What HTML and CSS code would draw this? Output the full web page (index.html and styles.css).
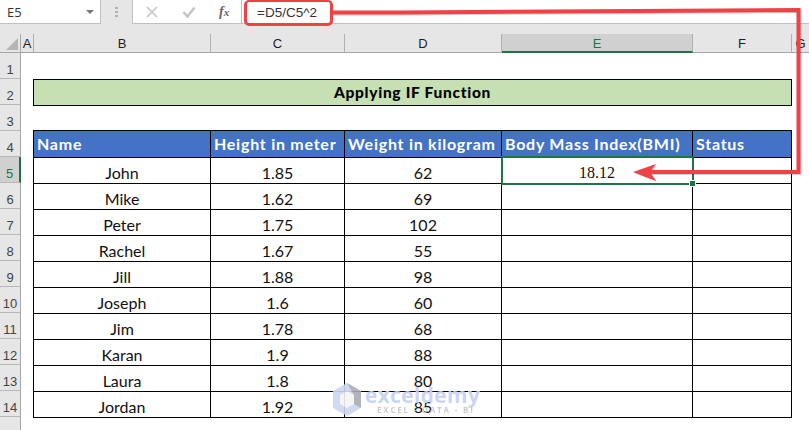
FILE: index.html
```html
<!DOCTYPE html>
<html lang="en">
<head>
<meta charset="utf-8">
<title>Applying IF Function</title>
<link rel="stylesheet" href="styles.css">
</head>
<body>
<div class="app">
  <div class="toolbar">
    <div class="namebox"><span>E5</span><i class="caret"></i></div>
    <div class="grip"><b></b><b></b><b></b></div>
    <div class="fxbox">
      <svg class="ic" width="12" height="12" viewBox="0 0 12 12"><path d="M1 1l10 10M11 1L1 11" stroke="#c4c4c4" stroke-width="1.600" fill="none"/></svg>
      <svg class="ic" width="14" height="12" viewBox="0 0 14 12"><path d="M1.500 6l4 4.500 7-9" stroke="#c4c4c4" stroke-width="2.400" fill="none"/></svg>
      <span class="fx">f<small>x</small></span>
    </div>
    <div class="formula"><span class="ftext">=D5/C5^2</span></div>
  </div>
  <div class="sheet">
    <div class="corner"><i></i></div>
    <div class="ch a">A</div><div class="ch">B</div><div class="ch">C</div><div class="ch">D</div><div class="ch sel">E</div><div class="ch">F</div><div class="ch last">G</div>

    <div class="rh">1</div><div class="row"></div>
    <div class="rh">2</div><div class="row"><div class="banner">Applying IF Function</div></div>
    <div class="rh">3</div><div class="row"></div>
    <div class="rh">4</div><div class="row tr head"><div>Name</div><div>Height in meter</div><div>Weight in kilogram</div><div>Body Mass Index(BMI)</div><div>Status</div></div>
    <div class="rh rsel">5</div><div class="row tr"><div class="c">John</div><div class="c">1.85</div><div class="c">62</div><div class="c active">18.12</div><div></div></div>
    <div class="rh">6</div><div class="row tr"><div class="c">Mike</div><div class="c">1.62</div><div class="c">69</div><div></div><div></div></div>
    <div class="rh">7</div><div class="row tr"><div class="c">Peter</div><div class="c">1.75</div><div class="c">102</div><div></div><div></div></div>
    <div class="rh">8</div><div class="row tr"><div class="c">Rachel</div><div class="c">1.67</div><div class="c">55</div><div></div><div></div></div>
    <div class="rh">9</div><div class="row tr"><div class="c">Jill</div><div class="c">1.88</div><div class="c">98</div><div></div><div></div></div>
    <div class="rh">10</div><div class="row tr"><div class="c">Joseph</div><div class="c">1.6</div><div class="c">60</div><div></div><div></div></div>
    <div class="rh">11</div><div class="row tr"><div class="c">Jim</div><div class="c">1.78</div><div class="c">68</div><div></div><div></div></div>
    <div class="rh">12</div><div class="row tr"><div class="c">Karan</div><div class="c">1.9</div><div class="c">88</div><div></div><div></div></div>
    <div class="rh">13</div><div class="row tr"><div class="c">Laura</div><div class="c">1.8</div><div class="c">80</div><div></div><div></div></div>
    <div class="rh">14</div><div class="row tr"><div class="c">Jordan</div><div class="c">1.92</div><div class="c">85</div><div></div><div></div></div>
    <div class="rh end"></div><div class="row"></div>
  </div>
  <div class="mark">
    <svg width="28" height="33" viewBox="0 0 28 33"><path d="M14 0l14 8v17l-14 8-14-8V8z" fill="#cdd7f2"/><path d="M14 0l14 8v17l-7-4v-9z" fill="#a9adb3"/><path d="M14 8l7 4v9l-7 4-7-4v-9z" fill="#f4f4f4"/></svg>
    <div class="marktext"><span class="m1">exceldemy</span><span class="m2">EXCEL - DATA - BI</span></div>
  </div>
  <svg class="arrow" width="809" height="430" viewBox="0 0 809 430">
    <path d="M332 12.500H400L798.500 10V172H650" fill="none" stroke="#ef4146" stroke-width="4"/>
    <path d="M633 172L656 164 650 172 656 181z" fill="#ef4146"/>
  </svg>
</div>
</body>
</html>
```
FILE: styles.css
```css
html, body { margin: 0; padding: 0; background: #fff; }
.app { position: relative; width: 809px; height: 430px; overflow: hidden; font-family: "Liberation Sans", Arial, sans-serif; color: #111; }
.toolbar { display: flex; height: 34px; background: #e6e6e6; box-sizing: border-box; }
.namebox { width: 101px; height: 24px; background: #fff; border-bottom: 1px solid #c0c0c0; border-right: 1px solid #c0c0c0; display: flex; align-items: center; justify-content: space-between; padding: 0 6px 0 7px; box-sizing: border-box; font: 13px "Open Sans", sans-serif; color: #333; }
.caret { width: 0; height: 0; border-left: 4px solid transparent; border-right: 4px solid transparent; border-top: 4px solid #777; }
.grip { width: 31px; height: 23px; display: flex; flex-direction: column; align-items: center; justify-content: center; gap: 2px; }
.grip b { width: 3px; height: 2px; background: #b0b0b0; }
.fxbox { width: 110px; height: 24px; background: #fff; border: 1px solid #c0c0c0; border-top: 0; display: flex; align-items: center; gap: 24px; padding-left: 13px; box-sizing: border-box; }
.fx { font: italic bold 14px "Liberation Serif", serif; color: #666; margin-left: -1px; }
.fx small { font-size: 11px; }
.formula { flex: 1; height: 24px; background: #fff; border-bottom: 1px solid #c0c0c0; box-sizing: border-box; }
.ftext { display: block; box-sizing: border-box; height: 26px; line-height: 22px; margin-left: 2px; padding: 0 0 0 10px; width: 89px; border: 3px solid #ef4146; border-top-width: 2px; border-radius: 5px; font-size: 13.500px; color: #333; white-space: nowrap; background: #fff; position: relative; z-index: 4; }
.sheet { display: grid; grid-template-columns: 21px 13px 177px 134px 157px 191px 99px 17px; grid-template-rows: 19px repeat(14, 26px) 1fr; height: 396px; }
.corner { background: #e6e6e6; border-right: 1px solid #a8a8a8; border-bottom: 1px solid #a8a8a8; box-sizing: border-box; position: relative; }
.corner i { position: absolute; right: 2px; bottom: 2px; width: 0; height: 0; border-left: 12px solid transparent; border-bottom: 12px solid #b5b5b5; }
.ch { background: #e6e6e6; border-right: 1px solid #b0b0b0; border-bottom: 1px solid #a8a8a8; box-sizing: border-box; text-align: center; font-size: 13px; line-height: 19px; color: #222; }
.ch.sel { background: #d0d0d0; border-bottom: 2px solid #217346; color: #217346; }
.ch.last { border-right: 0; }
.rh { background: #e6e6e6; border-right: 1px solid #a8a8a8; border-bottom: 1px solid #b8b8b8; box-sizing: border-box; text-align: center; font-size: 13px; line-height: 33px; color: #444; }
.rh.rsel { background: #d0d0d0; border-right: 2px solid #217346; color: #217346; }
.rh.end { border-bottom: 0; }
.row { grid-column: 2 / -1; display: grid; grid-template-columns: 12px 178px 134px 157px 191px 99px 17px; font-family: "Lato", sans-serif; }
.banner { grid-column: 2 / 7; box-sizing: border-box; background: #c6e0b4; border: 1px solid #000; height: 27px; text-align: center; font: 900 15.500px/25px "Lato", sans-serif; letter-spacing: .7px; color: #000; }
.tr > div { box-sizing: border-box; height: 27px; border-right: 1px solid #000; border-bottom: 1px solid #000; font-size: 16px; line-height: 31px; color: #111; }
.tr > div:nth-child(1) { grid-column: 2; border-left: 1px solid #000; }
.head > div { background: #4472c4; color: #fff; border-top: 1px solid #000; font-size: 16px; line-height: 26px; font-weight: 700; padding-left: 3px; letter-spacing: .75px; white-space: nowrap; margin-top: -1px; height: 28px; }
.tr > .c { text-align: center; }
.tr > .active { position: relative; font: 16px/31px "Liberation Serif", serif; outline: 2px solid #217346; outline-offset: -1px; z-index: 1; }
.tr > .active::after { content: ""; position: absolute; right: -4px; bottom: -4px; width: 5px; height: 5px; background: #217346; border: 1px solid #fff; }
.mark { position: absolute; left: 333px; top: 383px; display: flex; gap: 4px; opacity: .9; }
.marktext { display: flex; flex-direction: column; }
.m1 { font: bold 21px/20px "Open Sans", sans-serif; color: #c5d0f3; letter-spacing: .3px; margin-top: 2px; }
.m2 { font: bold 8px/10px "Open Sans", sans-serif; color: #c8c8c8; letter-spacing: 1.800px; padding-left: 12px; }
.arrow { position: absolute; left: 0; top: 0; pointer-events: none; z-index: 3; filter: drop-shadow(1px 1px 0 rgba(0,0,0,.18)); }
```
